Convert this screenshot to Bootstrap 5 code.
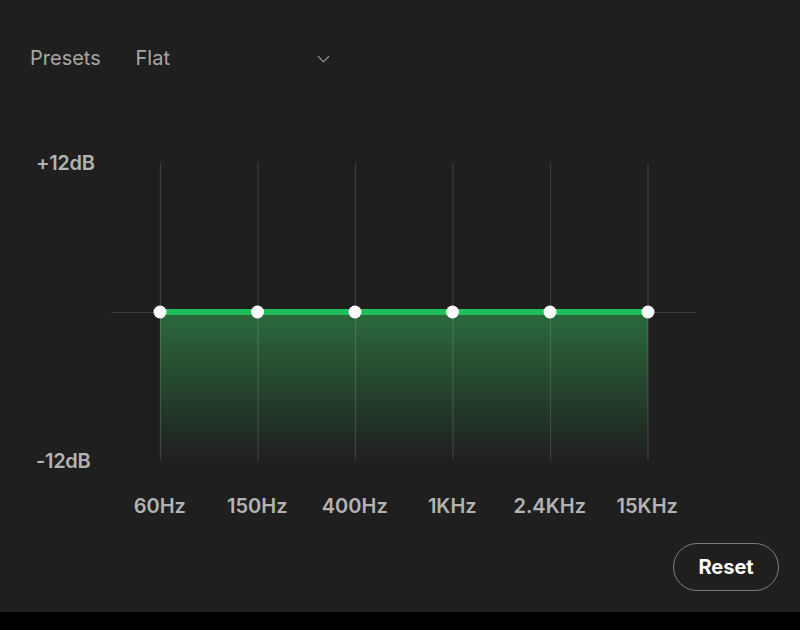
<!doctype html>
<html lang="en"><head><meta charset="utf-8"><title>Equalizer</title>
<link href="https://cdn.jsdelivr.net/npm/bootstrap@5.3.0/dist/css/bootstrap.min.css" rel="stylesheet">
<style>
html,body{height:100%;background:#000;}
body{font-family:Inter,"Liberation Sans",sans-serif;overflow:hidden;}
.eq{height:612px;background:#1f1f1f;padding:47px 21px 0 30px;color:#b3b3b3;}
.presets{height:23px;font-size:20px;line-height:23px;color:#a7a7a7;}
.presets .lbl{width:105.500px;}
.presets .val{width:181px;}
.chart-row{margin-top:80px;margin-left:6px;}
.yaxis{width:75px;height:324px;font-size:20px;font-weight:600;line-height:26px;color:#b3b3b3;letter-spacing:-.3px;}
.plot{display:block;margin-top:13px;}
.xaxis{width:585px;margin-left:81px;margin-top:19px;font-size:20px;font-weight:600;line-height:26px;}
.xaxis span{flex:1 1 0;text-align:center;white-space:nowrap;}
.btn-reset{width:106px;height:48px;margin-top:24px;padding:0;border:1px solid #7c7c7c;background:transparent;color:#fff;font-size:20px;font-weight:700;}
</style></head>
<body>
<main class="eq d-flex flex-column">
  <div class="presets d-flex align-items-center">
    <span class="lbl">Presets</span><span class="val">Flat</span>
    <svg width="13" height="8" viewBox="0 0 13 8" fill="none" stroke="#a7a7a7" stroke-width="1.1"><path d="M1 1.2l5.500 5.600 5.500-5.600"/></svg>
  </div>
  <div class="chart-row d-flex align-items-start">
    <div class="yaxis d-flex flex-column justify-content-between"><span>+12dB</span><span>-12dB</span></div>
    <svg class="plot" width="585" height="297" viewBox="111 163 585 297">
      <defs><linearGradient id="fill" x1="0" y1="0" x2="0" y2="1"><stop offset="0" stop-color="#2b6a3d"/><stop offset="1" stop-color="#1f1f1f"/></linearGradient></defs>
      <rect x="160" y="312" width="488" height="148" fill="url(#fill)"/>
      <g stroke="#fff" stroke-opacity=".14" stroke-width="1.200">
        <path d="M111 312.500H696"/>
        <path d="M160.500 163V460M258 163V460M355.500 163V460M453 163V460M550.500 163V460M648 163V460"/>
      </g>
      <path d="M160 312H648" stroke="#21bf5a" stroke-width="6"/>
      <g fill="#fff"><circle cx="160" cy="312" r="6.500"/><circle cx="257.500" cy="312" r="6.500"/><circle cx="355" cy="312" r="6.500"/><circle cx="452.500" cy="312" r="6.500"/><circle cx="550" cy="312" r="6.500"/><circle cx="648" cy="312" r="6.500"/></g>
    </svg>
  </div>
  <div class="xaxis d-flex"><span>60Hz</span><span>150Hz</span><span>400Hz</span><span>1KHz</span><span>2.4KHz</span><span>15KHz</span></div>
  <div class="d-flex justify-content-end"><button type="button" class="btn btn-reset rounded-pill">Reset</button></div>
</main>
<script src="https://cdn.jsdelivr.net/npm/bootstrap@5.3.0/dist/js/bootstrap.bundle.min.js"></script>
</body></html>
